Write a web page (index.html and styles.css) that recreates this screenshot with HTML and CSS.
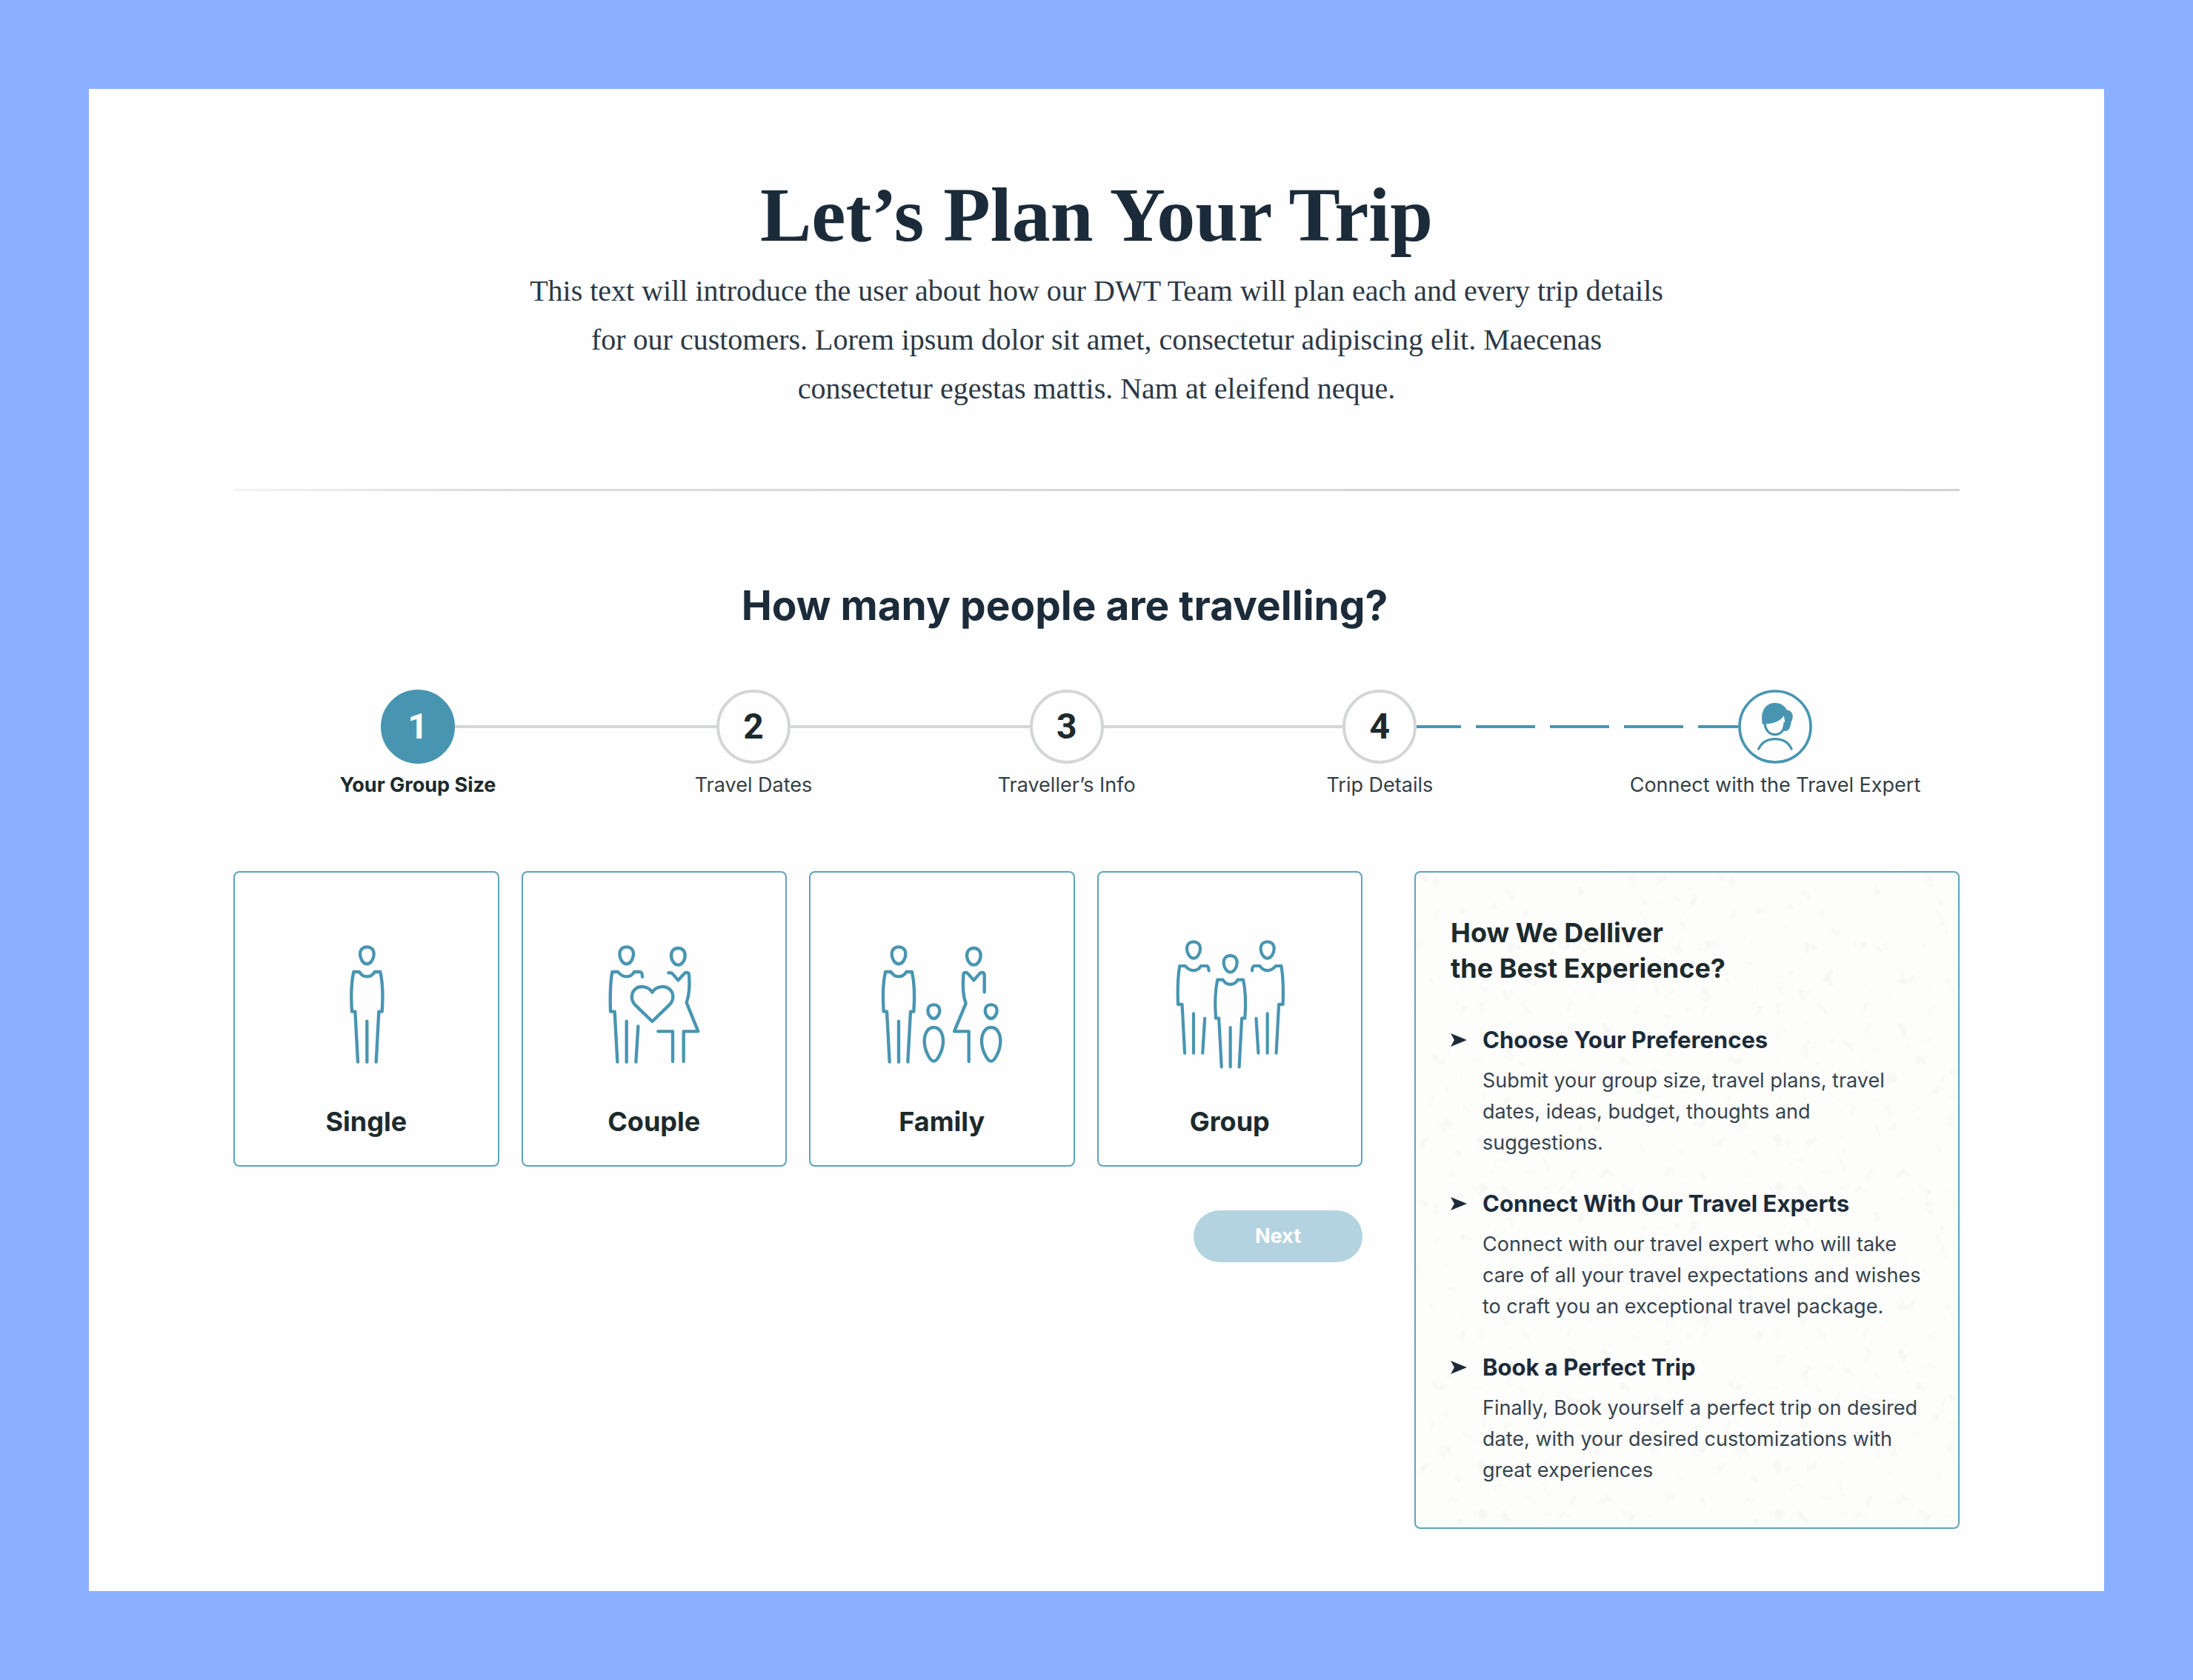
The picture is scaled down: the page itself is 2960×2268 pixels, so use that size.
FILE: index.html
```html
<!DOCTYPE html>
<html lang="en">
<head>
<meta charset="utf-8">
<meta name="viewport" content="width=device-width, initial-scale=1">
<title>Let’s Plan Your Trip</title>
<link rel="stylesheet" href="styles.css">
</head>
<body>
<svg class="symbols" aria-hidden="true">
  <symbol id="man" overflow="visible">
    <path d="M0 354c17 0 28 12 28 29 0 20-13 40-28 40s-28-20-28-40c0-17 11-29 28-29z"/>
    <path d="M-37 820-48 616H-61C-65 560-65 505-54 455H-31C-22 471-11 474 0 474S22 471 31 455H54C65 505 65 560 61 616H48L37 820M0 655V820"/>
  </symbol>
  <symbol id="man-side" overflow="visible">
    <path d="M0 354c17 0 28 12 28 29 0 20-13 40-28 40s-28-20-28-40c0-17 11-29 28-29z"/>
    <path d="M-37 820-48 616H-65C-67 560-67 505-58 455H-35C-22 471-11 474 0 474S22 471 31 455H55C62 457 64 464 64 475M0 655V820M38 820 47 675"/>
  </symbol>
  <symbol id="head" overflow="visible">
    <path d="M0 359c17 0 28 12 28 29 0 20-13 39-28 39s-28-19-28-39c0-17 11-29 28-29z"/>
  </symbol>
  <symbol id="child" overflow="visible">
    <path d="M0 588c15 0 24 9 24 24 0 16-12 32-24 32s-24-16-24-32c0-15 9-24 24-24zM0 680c24 0 38 24 38 56 0 34-22 81-38 81s-38-47-38-81c0-32 14-56 38-56z"/>
  </symbol>
</svg>

<main class="page">
  <header class="intro">
    <h1 class="intro-title">Let’s Plan Your Trip</h1>
    <p class="intro-text">This text will introduce the user about how our DWT Team will plan each and every trip details<br>for our customers. Lorem ipsum dolor sit amet, consectetur adipiscing elit. Maecenas<br>consectetur egestas mattis. Nam at eleifend neque.</p>
  </header>
  <hr class="rule">

  <h2 class="question" id="question">How many people are travelling?</h2>

  <ol class="stepper">
    <li class="step step-current" aria-current="step"><span class="step-mark">1</span><span class="step-label">Your Group Size</span></li>
    <li class="link link-first" role="presentation"></li>
    <li class="step"><span class="step-mark">2</span><span class="step-label">Travel Dates</span></li>
    <li class="link" role="presentation"></li>
    <li class="step"><span class="step-mark">3</span><span class="step-label">Traveller’s Info</span></li>
    <li class="link" role="presentation"></li>
    <li class="step"><span class="step-mark">4</span><span class="step-label">Trip Details</span></li>
    <li class="link link-dashed" role="presentation"></li>
    <li class="step">
      <svg class="expert" viewBox="78 63 300 300" aria-hidden="true">
        <circle cx="228" cy="213" r="144" fill="none" stroke-width="11"/>
        <path class="solid" d="M177 203C166 148 190 117 228 117C249 117 266 127 275 145C295 148 304 165 297 185C290 197 292 205 288 216C284 228 273 232 258 231C269 210 269 188 263 169C250 190 225 202 177 203Z"/>
        <path d="M186 196C186 226 205 245 228 245S267 226 267 196" fill="none" stroke-width="10"/>
        <path d="M161 303C175 275 200 263 228 263S281 275 294 303" fill="none" stroke-width="10" stroke-linecap="round"/>
      </svg>
      <span class="step-label">Connect with the Travel Expert</span>
    </li>
  </ol>

  <div class="columns">
    <form class="chooser">
      <div class="options" role="radiogroup" aria-labelledby="question">
        <label class="option">
          <input class="option-input" type="radio" name="group-size" value="single">
          <svg class="figure" viewBox="312 320 540 540" aria-hidden="true"><use href="#man" x="586"/></svg>
          <span class="option-name">Single</span>
        </label>
        <label class="option">
          <input class="option-input" type="radio" name="group-size" value="couple">
          <svg class="figure" viewBox="308 320 540 540" aria-hidden="true">
            <use href="#man-side" x="466"/>
            <use href="#head" x="675"/>
            <path d="M636 459C652 456 654 466 675 489L699 463C706 455 719 456 719 468C723 510 722 540 709 580L756 696H697V818M594 696H653V818"/>
            <path d="M570 538C555 512 520 510 503 523C484 538 482 568 500 588L570 656 640 588C660 568 658 538 638 523C620 510 585 512 570 538Z"/>
          </svg>
          <span class="option-name">Couple</span>
        </label>
        <label class="option">
          <input class="option-input" type="radio" name="group-size" value="family">
          <svg class="figure" viewBox="303 320 540 540" aria-hidden="true">
            <use href="#man" x="399"/>
            <use href="#child" x="541"/>
            <use href="#head" x="703"/>
            <path d="M746 537V468C746 456 733 455 726 463L703 489 680 463C673 455 661 456 661 468C657 520 660 555 671 583L624 696H683V818"/>
            <use href="#child" x="773"/>
          </svg>
          <span class="option-name">Family</span>
        </label>
        <label class="option">
          <input class="option-input" type="radio" name="group-size" value="group">
          <svg class="figure" viewBox="298 320 540 540" aria-hidden="true">
            <use href="#man-side" transform="translate(421 -9) scale(.967)"/>
            <use href="#man" transform="translate(570 47) scale(.967)"/>
            <use href="#man-side" transform="translate(720 -9) scale(-.967 .967)"/>
          </svg>
          <span class="option-name">Group</span>
        </label>
      </div>
      <button class="next" type="button">Next</button>
    </form>

    <aside class="panel">
      <h2 class="panel-title">How We Delliver<br>the Best Experience?</h2>
      <ul class="points">
        <li class="point">
          <svg class="arrow" viewBox="0 0 22 18" aria-hidden="true"><path d="M0 0 22 9 0 18 5 9Z"/></svg>
          <div class="point-body">
            <h3 class="point-title">Choose Your Preferences</h3>
            <p class="point-text">Submit your group size, travel plans, travel<br>dates, ideas, budget, thoughts and<br>suggestions.</p>
          </div>
        </li>
        <li class="point">
          <svg class="arrow" viewBox="0 0 22 18" aria-hidden="true"><path d="M0 0 22 9 0 18 5 9Z"/></svg>
          <div class="point-body">
            <h3 class="point-title">Connect With Our Travel Experts</h3>
            <p class="point-text">Connect with our travel expert who will take<br>care of all your travel expectations and wishes<br>to craft you an exceptional travel package.</p>
          </div>
        </li>
        <li class="point">
          <svg class="arrow" viewBox="0 0 22 18" aria-hidden="true"><path d="M0 0 22 9 0 18 5 9Z"/></svg>
          <div class="point-body">
            <h3 class="point-title">Book a Perfect Trip</h3>
            <p class="point-text">Finally, Book yourself a perfect trip on desired<br>date, with your desired customizations with<br>great experiences</p>
          </div>
        </li>
      </ul>
    </aside>
  </div>
</main>
</body>
</html>
```
FILE: styles.css
```css
:root {
  --accent: #4895b1;
  --outline: #5fa3bc;
  --grey: #d4d6d6;
  --ink: #1c2b39;
  --dark: #1d2a2d;
  --text: #36434e;
}

* { box-sizing: border-box; }

body {
  margin: 0;
  padding: 120px;
  background: #8aafff;
  color: var(--dark);
  font-family: Inter, "Liberation Sans", sans-serif;
}

h1, h2, h3, p, ul, ol { margin: 0; padding: 0; }
ul, ol { list-style: none; }

.symbols { position: absolute; width: 0; height: 0; }

.page {
  padding: 106px 195px 84px;
  background: #fefefe;
}

.intro { text-align: center; color: var(--ink); }

.intro-title {
  font: bold 104px/128px "Liberation Serif", serif;
}

.intro-text {
  margin-top: 6px;
  font: 40px/66px "Liberation Serif", serif;
  color: #2c3845;
}

.rule {
  height: 3px;
  margin: 102px 0 122px;
  border: 0;
  background: linear-gradient(90deg, #f4f4f4, #dcdcdc 15%, #d2d2d2);
}

.question {
  padding-right: 86px;
  font-size: 55px;
  line-height: 64px;
  text-align: center;
  color: var(--ink);
}

.stepper {
  display: flex;
  align-items: flex-start;
  margin-top: 82px;
  padding: 0 199px;
}

.step {
  display: flex;
  flex: 0 0 100px;
  flex-direction: column;
  align-items: center;
  gap: 9px;
  min-width: 0;
}

.step-mark {
  display: flex;
  align-items: center;
  justify-content: center;
  width: 100px;
  height: 100px;
  border: 4px solid var(--grey);
  border-radius: 50%;
  font: bold 48px/56px Roboto, sans-serif;
}

.step-label {
  font-size: 27px;
  line-height: 40px;
  white-space: nowrap;
  color: #343f44;
}

.step-current .step-mark {
  border-color: var(--accent);
  background: var(--accent);
  color: #fff;
}

.step-current .step-label { font-weight: 700; color: var(--dark); }

.link {
  flex: 32 1 0;
  height: 4px;
  margin-top: 48px;
  background: var(--grey);
}

.link-first { flex-grow: 35; }

.link-dashed {
  flex-grow: 43;
  background: repeating-linear-gradient(90deg, var(--accent) 0 80px, transparent 80px 100px) -20px 0 / 500px 4px;
}

.expert {
  width: 100px;
  height: 100px;
  stroke: var(--accent);
}

.solid { fill: var(--accent); stroke: none; }

.columns {
  display: grid;
  grid-template-columns: 1524fr 736fr;
  align-items: start;
  gap: 70px;
  margin-top: 96px;
}

.chooser {
  display: flex;
  flex-direction: column;
  align-items: flex-end;
  gap: 59px;
}

.options {
  display: grid;
  grid-template-columns: repeat(4, 1fr);
  gap: 30px;
  width: 100%;
}

.option {
  position: relative;
  display: flex;
  flex-direction: column;
  align-items: center;
  gap: 45px;
  padding: 89px 16px 37px;
  border: 2px solid var(--outline);
  border-radius: 8px;
}

.option-input {
  position: absolute;
  inset: 0;
  margin: 0;
  appearance: none;
  cursor: pointer;
}

.figure {
  width: 180px;
  height: 180px;
  fill: none;
  stroke: var(--accent);
  stroke-width: 13;
  stroke-linecap: round;
  stroke-linejoin: round;
}

.option-name {
  font-size: 36px;
  font-weight: 700;
  line-height: 44px;
}

.next {
  width: 228px;
  height: 70px;
  border: 0;
  border-radius: 35px;
  background: #b3d3e0;
  color: #fff;
  font: bold 27px/40px Inter, sans-serif;
}

.panel {
  padding: 57px 47px 56px;
  border: 2px solid var(--outline);
  border-radius: 8px;
  background: #fdfdfb url("data:image/svg+xml,%3Csvg xmlns='http://www.w3.org/2000/svg' width='400' height='440'%3E%3Cfilter id='n' x='0' y='0' width='100%25' height='100%25'%3E%3CfeTurbulence type='fractalNoise' baseFrequency='.06 .045' numOctaves='4' seed='8' stitchTiles='stitch'/%3E%3CfeColorMatrix values='0 0 0 0 .5 0 0 0 0 .5 0 0 0 0 .5 5 0 0 0 -3.2'/%3E%3C/filter%3E%3Crect width='400' height='440' filter='url(%23n)' opacity='.1'/%3E%3C/svg%3E");
}

.panel-title {
  font-size: 36px;
  line-height: 48px;
}

.points {
  display: grid;
  gap: 39px;
  margin-top: 51px;
}

.point {
  display: flex;
  gap: 21px;
}

.arrow {
  flex: none;
  width: 22px;
  height: 18px;
  margin-top: 13px;
  fill: var(--ink);
}

.point-title {
  font-size: 31px;
  line-height: 44px;
  color: var(--ink);
}

.point-text {
  margin-top: 12px;
  font-size: 27px;
  line-height: 42px;
  color: var(--text);
}
```
